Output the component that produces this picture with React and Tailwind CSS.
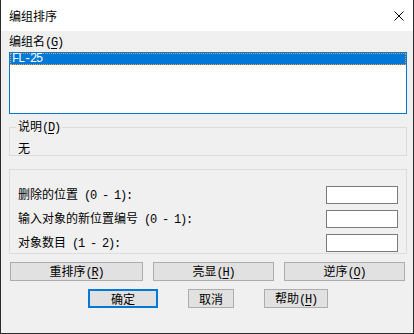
import React from "react";

function L({ children, u }) {
  return (
    <span
      className={
        "font-['Liberation_Mono',monospace] tracking-[-1.2px] whitespace-pre" +
        (u ? " underline underline-offset-2" : "")
      }
    >
      {children}
    </span>
  );
}

function Acc({ k }) {
  return (
    <>
      <L>(</L>
      <L u>{k}</L>
      <L>)</L>
    </>
  );
}

function Btn({ w, children, def }) {
  return (
    <div
      className={
        "h-[19px] flex items-center justify-center bg-[#e1e1e1] " +
        (def ? "border-2 border-[#0078d7]" : "border border-[#adadad]")
      }
      style={{ width: w }}
    >
      <span className="leading-[14px]">{children}</span>
    </div>
  );
}

function Row({ children }) {
  return (
    <div className="h-[18px] flex items-center justify-between">
      <span className="leading-[14px]">{children}</span>
      <div className="w-[72px] h-[18px] bg-white border border-[#7a7a7a]" />
    </div>
  );
}

export default function App() {
  return (
    <div className="w-[414px] h-[334px] bg-[#f0f0f0] border-x border-b border-[#2b2b2b] flex flex-col text-[12px] leading-[14px] text-black font-['Noto_Sans_CJK_SC',sans-serif]">
      <div className="h-[31px] bg-white flex items-center justify-between pl-[8px] pr-[9px] shrink-0">
        <span>编组排序</span>
        <svg width="10" height="10" viewBox="0 0 10 10" className="mt-[1px]">
          <path d="M0.5 0.5 L9.5 9.5 M9.5 0.5 L0.5 9.5" stroke="#000" strokeWidth="1" fill="none" />
        </svg>
      </div>
      <div className="flex flex-col pl-[8px] pr-[6px]">
        <div className="h-[21px] flex items-center">
          <span>
            编组名<Acc k="G" />
          </span>
        </div>
        <div className="h-[62px] bg-white border border-[#0078d7]">
          <div className="h-[12px] bg-[#0078d7] border border-dotted border-[#ff9c2a] flex items-center pl-[1px] text-white">
            <L>FL-25</L>
          </div>
        </div>
        <div className="relative mt-[13px] h-[29px] border border-[#dcdcdc] pl-[8px] pt-[13px]">
          <span className="absolute left-[6px] top-[-9px] px-[2px] bg-[#f0f0f0]">
            说明<Acc k="D" />
          </span>
          <span>无</span>
        </div>
        <div className="mt-[13px] h-[85px] border border-[#dcdcdc] pt-[16px] pl-[8px] pr-[8px] flex flex-col gap-[6px]">
          <Row>
            删除的位置<L> (0 - 1):</L>
          </Row>
          <Row>
            输入对象的新位置编号<L> (0 - 1):</L>
          </Row>
          <Row>
            对象数目<L> (1 - 2):</L>
          </Row>
        </div>
        <div className="mt-[8px] pl-[1px] flex gap-[10px]">
          <Btn w={133}>
            重排序<Acc k="R" />
          </Btn>
          <Btn w={121}>
            亮显<Acc k="H" />
          </Btn>
          <Btn w={121}>
            逆序<Acc k="O" />
          </Btn>
        </div>
        <div className="mt-[8px] pl-[79px] flex gap-[30px]">
          <Btn w={70} def>
            确定
          </Btn>
          <Btn w={46}>取消</Btn>
          <Btn w={64}>
            帮助<Acc k="H" />
          </Btn>
        </div>
      </div>
    </div>
  );
}
